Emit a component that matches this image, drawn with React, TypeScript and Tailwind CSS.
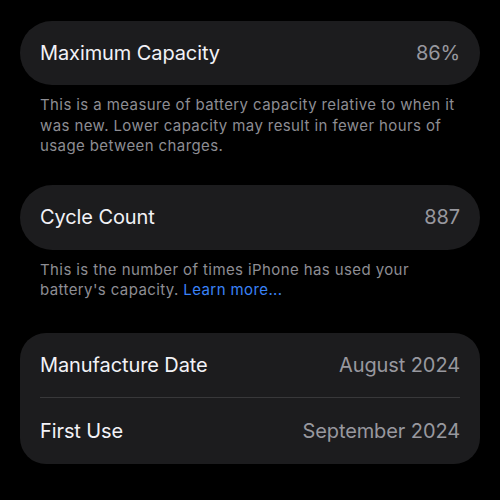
export default function App() {
  return (
    <div
      className="w-[500px] h-[500px] bg-black overflow-hidden px-5 pt-[21px]"
      style={{ fontFamily: 'Inter, "Noto Sans", sans-serif' }}
    >
      {/* Maximum Capacity */}
      <div className="h-[64px] rounded-full bg-[#1c1c1e] flex items-center justify-between px-5">
        <span className="text-[20px] text-[#f2f2f7] tracking-[-0.1px]">Maximum Capacity</span>
        <span className="text-[20px] text-[#98989f] tracking-[-0.1px]">86%</span>
      </div>
      <p className="px-5 pt-[10px] text-[15px] leading-[20.5px] text-[#8d8d93] tracking-[0.4px]">
        This is a measure of battery capacity relative to when it was new. Lower capacity may result in fewer hours of usage between charges.
      </p>

      {/* Cycle Count */}
      <div className="mt-[28px] h-[65px] rounded-full bg-[#1c1c1e] flex items-center justify-between px-5">
        <span className="text-[20px] text-[#f2f2f7] tracking-[-0.1px]">Cycle Count</span>
        <span className="text-[20px] text-[#98989f] tracking-[-0.1px]">887</span>
      </div>
      <p className="px-5 pt-[10px] text-[15px] leading-[20.5px] text-[#8d8d93] tracking-[0.4px]">
        This is the number of times iPhone has used your battery's capacity.{' '}
        <span className="text-[#3a82f7]">Learn more...</span>
      </p>

      {/* Dates */}
      <div className="mt-[32px] rounded-[26px] bg-[#1c1c1e] px-5">
        <div className="h-[64px] flex items-center justify-between">
          <span className="text-[20px] text-[#f2f2f7] tracking-[-0.1px]">Manufacture Date</span>
          <span className="text-[20px] text-[#98989f] tracking-[-0.1px]">August 2024</span>
        </div>
        <div className="h-px bg-[#38383a]" />
        <div className="h-[66px] flex items-center justify-between">
          <span className="text-[20px] text-[#f2f2f7] tracking-[-0.1px]">First Use</span>
          <span className="text-[20px] text-[#98989f] tracking-[-0.1px]">September 2024</span>
        </div>
      </div>
    </div>
  );
}
